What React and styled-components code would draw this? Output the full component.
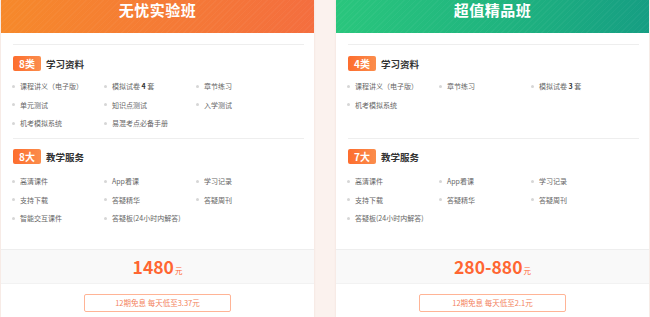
import styled, { createGlobalStyle } from 'styled-components';

const plans = [
  {
    name: '无忧实验班',
    theme: 'orange',
    materialsCount: '8类',
    materials: [
      '课程讲义（电子版）',
      ['模拟试卷 ', '4', ' 套'],
      '章节练习',
      '单元测试',
      '知识点测试',
      '入学测试',
      '机考模拟系统',
      '易混考点必备手册',
    ],
    servicesCount: '8大',
    services: [
      '高清课件',
      'App看课',
      '学习记录',
      '支持下载',
      '答疑精华',
      '答疑周刊',
      '智能交互课件',
      '答疑板(24小时内解答)',
    ],
    price: '1480',
    offer: '12期免息 每天低至3.37元',
  },
  {
    name: '超值精品班',
    theme: 'green',
    materialsCount: '4类',
    materials: [
      '课程讲义（电子版）',
      '章节练习',
      ['模拟试卷 ', '3', ' 套'],
      '机考模拟系统',
    ],
    servicesCount: '7大',
    services: [
      '高清课件',
      'App看课',
      '学习记录',
      '支持下载',
      '答疑精华',
      '答疑周刊',
      '答疑板(24小时内解答)',
    ],
    price: '280-880',
    offer: '12期免息 每天低至2.1元',
  },
];

const headerBg = {
  orange: 'linear-gradient(90deg, #f6892b 0%, #f57a36 55%, #f46e3f 100%)',
  green: 'linear-gradient(90deg, #2ac67d 0%, #1fb37f 55%, #169e83 100%)',
};

function Item({ text }) {
  return (
    <ListItem>
      <span>
        {Array.isArray(text) ? (
          <>
            {text[0]}
            <strong>{text[1]}</strong>
            {text[2]}
          </>
        ) : (
          text
        )}
      </span>
    </ListItem>
  );
}

function Card({ plan }) {
  return (
    <CardBox>
      <Header $theme={plan.theme}>{plan.name}</Header>
      <Body>
        <Divider />
        <Section $height="93px">
          <SectionTitle>
            <Badge>{plan.materialsCount}</Badge>
            学习资料
          </SectionTitle>
          <List>
            {plan.materials.map((m, i) => (
              <Item key={i} text={m} />
            ))}
          </List>
        </Section>
        <Divider />
        <Section $height="110px" $top="10px">
          <SectionTitle>
            <Badge>{plan.servicesCount}</Badge>
            教学服务
          </SectionTitle>
          <List $top="8px">
            {plan.services.map((m, i) => (
              <Item key={i} text={m} />
            ))}
          </List>
        </Section>
      </Body>
      <PriceBar>
        <Price>
          {plan.price}
          <Unit>元</Unit>
        </Price>
      </PriceBar>
      <OfferRow>
        <OfferButton>{plan.offer}</OfferButton>
      </OfferRow>
    </CardBox>
  );
}

export default function App() {
  return (
    <>
      <GlobalStyle />
      <Page>
        {plans.map((p) => (
          <Card key={p.name} plan={p} />
        ))}
      </Page>
    </>
  );
}

const GlobalStyle = createGlobalStyle`
  body {
    margin: 0;
    background: #fbf2ee;
    font-family: "Noto Sans CJK SC", "Noto Sans", sans-serif;
  }
`;

const Page = styled.div`
  display: flex;
  gap: 22px;
  padding-left: 1px;
  height: 317px;
  overflow: hidden;
`;

const CardBox = styled.div`
  width: 313px;
  flex-shrink: 0;
  background: #fff;
  display: flex;
  flex-direction: column;
  box-shadow: 0 0 2px rgba(200, 160, 140, 0.25);
`;

const Header = styled.div`
  height: 33px;
  box-sizing: border-box;
  padding-top: 1px;
  background:
    repeating-linear-gradient(135deg, rgba(255, 255, 255, 0.035) 0 1px, transparent 1px 4px),
    ${(p) => headerBg[p.$theme]};
  color: #fff;
  font-size: 15px;
  font-weight: 700;
  line-height: 17px;
  text-align: center;
  letter-spacing: 0.5px;
`;

const Body = styled.div`
  padding: 11px 10px 0 12px;
`;

const Divider = styled.div`
  height: 1px;
  background: #eeeeee;
`;

const Section = styled.div`
  height: ${(p) => p.$height};
  box-sizing: border-box;
  padding-top: ${(p) => p.$top || '11px'};
`;

const SectionTitle = styled.div`
  display: flex;
  align-items: center;
  gap: 5px;
  height: 15px;
  font-size: 9.5px;
  font-weight: 700;
  color: #333;
`;

const Badge = styled.span`
  width: 28px;
  height: 15px;
  border-radius: 2px;
  background: linear-gradient(90deg, #fd6d2e 0%, #fb8d4c 100%);
  color: #fff;
  font-size: 10px;
  font-weight: 700;
  line-height: 15px;
  text-align: center;
`;

const List = styled.div`
  display: grid;
  grid-template-columns: repeat(3, 92px);
  margin-top: ${(p) => p.$top || '6px'};
`;

const ListItem = styled.div`
  display: flex;
  align-items: center;
  height: 18.5px;
  font-size: 7px;
  color: #666;
  white-space: pre;

  &::before {
    content: '';
    width: 3px;
    height: 3px;
    border-radius: 50%;
    background: #d6d6d6;
    margin: 0 5px 0 -1px;
  }

  strong {
    color: #333;
    font-weight: 700;
  }
`;

const PriceBar = styled.div`
  height: 33px;
  background: #f9f9f9;
  border-top: 1px solid #eeeeee;
  border-bottom: 1px solid #f2f2f2;
  display: flex;
  align-items: center;
  justify-content: center;
`;

const Price = styled.div`
  color: #ff6632;
  font-size: 17.5px;
  font-weight: 700;
  line-height: 1;
  display: flex;
  align-items: baseline;
`;

const Unit = styled.span`
  font-size: 7.5px;
  font-weight: 400;
  margin-left: 1px;
`;

const OfferRow = styled.div`
  display: flex;
  justify-content: center;
  padding-top: 10px;
`;

const OfferButton = styled.div`
  width: 147px;
  height: 18px;
  box-sizing: border-box;
  border: 1px solid #ffb496;
  border-radius: 2px;
  color: #f3825d;
  font-size: 7.5px;
  line-height: 16px;
  text-align: center;
`;
